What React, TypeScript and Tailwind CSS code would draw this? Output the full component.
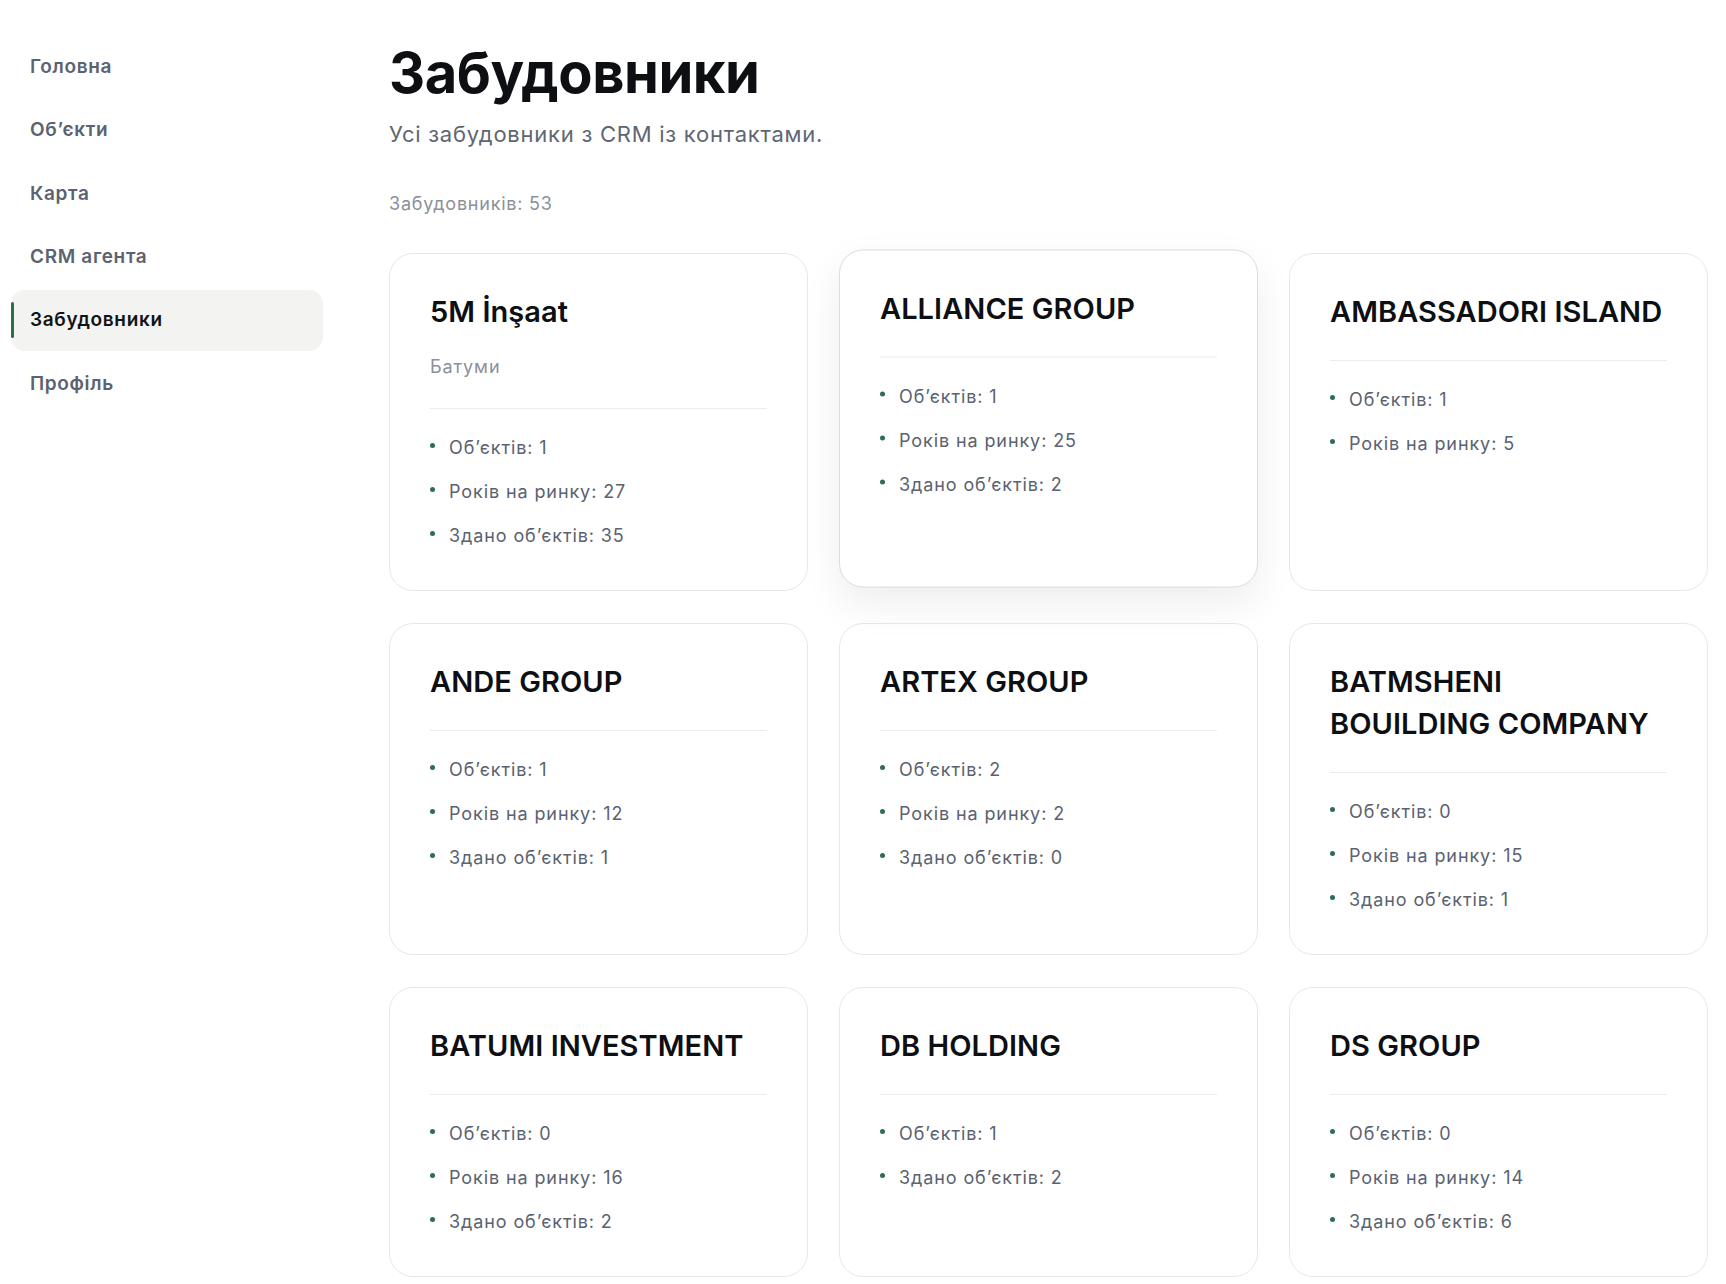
import React from "react";

type Dev = {
  name: string;
  city?: string;
  stats: string[];
  hover?: boolean;
};

const devs: Dev[] = [
  { name: "5M İnşaat", city: "Батуми", stats: ["Об’єктів: 1", "Років на ринку: 27", "Здано об’єктів: 35"] },
  { name: "ALLIANCE GROUP", stats: ["Об’єктів: 1", "Років на ринку: 25", "Здано об’єктів: 2"], hover: true },
  { name: "AMBASSADORI ISLAND", stats: ["Об’єктів: 1", "Років на ринку: 5"] },
  { name: "ANDE GROUP", stats: ["Об’єктів: 1", "Років на ринку: 12", "Здано об’єктів: 1"] },
  { name: "ARTEX GROUP", stats: ["Об’єктів: 2", "Років на ринку: 2", "Здано об’єктів: 0"] },
  { name: "BATMSHENI BOUILDING COMPANY", stats: ["Об’єктів: 0", "Років на ринку: 15", "Здано об’єктів: 1"] },
  { name: "BATUMI INVESTMENT", stats: ["Об’єктів: 0", "Років на ринку: 16", "Здано об’єктів: 2"] },
  { name: "DB HOLDING", stats: ["Об’єктів: 1", "Здано об’єктів: 2"] },
  { name: "DS GROUP", stats: ["Об’єктів: 0", "Років на ринку: 14", "Здано об’єктів: 6"] },
];

const nav = ["Головна", "Об’єкти", "Карта", "CRM агента", "Забудовники", "Профіль"];

function Card({ d }: { d: Dev }) {
  return (
    <div
      className={
        d.hover
          ? "flex flex-col rounded-[24px] border border-[#dcdcdc] bg-white px-10 pt-[37px] pb-10 -translate-y-[3.5px] shadow-[0_16px_40px_rgba(0,0,0,0.07)]"
          : "flex flex-col rounded-[24px] border border-[#e8e8e8] bg-white px-10 pt-[37px] pb-10"
      }
    >
      <div className="border-b border-[#ececec] pb-[27px]">
        <h2 className="text-[29px] leading-[42px] font-semibold tracking-[0.002em] text-[#0d0f13]">{d.name}</h2>
        {d.city && <div className="mt-5 text-[18px] leading-[28px] tracking-[0.05em] text-[#8b909a]">{d.city}</div>}
      </div>
      <ul className="flex flex-col gap-4 pt-[25px]">
        {d.stats.map((s) => (
          <li key={s} className="flex items-start text-[18px] leading-[28px] tracking-[0.05em] text-[#5b6270]">
            <span className="mt-[9.5px] mr-[14px] h-[5px] w-[5px] shrink-0 rounded-full bg-[#2f6d51]" />
            <span>{s}</span>
          </li>
        ))}
      </ul>
    </div>
  );
}

export default function App() {
  return (
    <div className="flex min-h-screen bg-white" style={{ fontFamily: "Inter, 'Noto Sans', sans-serif" }}>
      <aside className="w-[389px] shrink-0 pl-[11px] pt-[36.5px]">
        <nav className="flex w-[312px] flex-col gap-[2.4px]">
          {nav.map((n) => {
            const active = n === "Забудовники";
            return (
              <div
                key={n}
                className={
                  active
                    ? "relative flex h-[61px] items-center rounded-[14px] bg-[#f3f3f1] pl-[19px] text-[19px] font-semibold tracking-[0.035em] text-[#111318]"
                    : "flex h-[61px] items-center rounded-[14px] pl-[19px] text-[19px] font-semibold tracking-[0.035em] text-[#5b6270]"
                }
              >
                {active && <span className="absolute left-0 top-[12px] h-[36px] w-[3px] rounded-full bg-[#2f6d51]" />}
                {n}
              </div>
            );
          })}
        </nav>
      </aside>
      <main className="flex-1 pr-[18px] pt-[45px] pb-10">
        <h1 className="text-[56px] leading-[56px] font-bold tracking-[-0.008em] text-[#0d0f13]">Забудовники</h1>
        <p className="mt-[17px] text-[22px] leading-[32px] tracking-[0.034em] text-[#5f6673]">Усі забудовники з CRM із контактами.</p>
        <div className="mt-[40px] text-[18px] leading-[28px] tracking-[0.043em] text-[#8b909a]">Забудовників: 53</div>
        <div className="mt-[34.5px] grid grid-cols-3 gap-x-[31px] gap-y-[32px]">
          {devs.map((d) => (
            <Card key={d.name} d={d} />
          ))}
        </div>
      </main>
    </div>
  );
}
